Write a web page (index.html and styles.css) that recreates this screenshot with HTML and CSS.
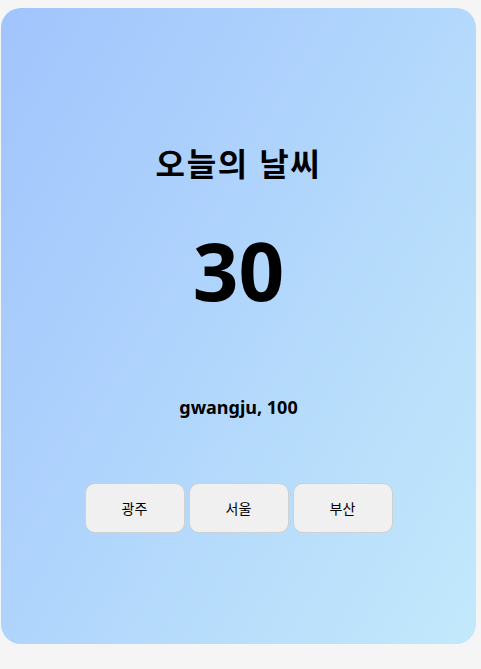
FILE: index.html
```html
<!DOCTYPE html>
<html lang="ko">
<head>
<meta charset="utf-8">
<link rel="stylesheet" href="styles.css">
<title>오늘의 날씨</title>
</head>
<body>
<div class="card">
  <h1 class="title">오늘의 날씨</h1>
  <div class="temp">30</div>
  <div class="info">gwangju, 100</div>
  <div class="buttons">
    <button class="btn">광주</button>
    <button class="btn">서울</button>
    <button class="btn">부산</button>
  </div>
</div>
</body>
</html>
```
FILE: styles.css
```css
html, body {
  margin: 0;
  padding: 0;
  background: #f5f5f5;
}
body {
  padding: 8px 5px 25px 1px;
  font-family: "Noto Sans", "Noto Sans CJK KR", sans-serif;
}
.card {
  height: 636px;
  box-sizing: border-box;
  border-radius: 20px;
  background: linear-gradient(120deg, #a1c4fd 0%, #c2e9fb 100%);
  display: flex;
  flex-direction: column;
  align-items: center;
  padding-top: 134px;
}
.title {
  margin: 0;
  font-family: "Noto Sans CJK KR", sans-serif;
  font-size: 32px;
  line-height: 40px;
  font-weight: 700;
  letter-spacing: 1.6px;
  color: #000;
}
.temp {
  margin-top: 40px;
  font-size: 80px;
  line-height: 96px;
  font-weight: 700;
  color: #000;
}
.info {
  margin-top: 77px;
  font-size: 18px;
  line-height: 24px;
  font-weight: 700;
  color: #000;
}
.buttons {
  margin-top: 64px;
  display: flex;
  gap: 4px;
}
.btn {
  width: 100px;
  height: 50px;
  border: 1px solid #d0d0d0;
  border-radius: 10px;
  background: #f0f0f0;
  font-family: "Noto Sans CJK KR", sans-serif;
  font-size: 14px;
  color: #000;
  padding: 0;
}
```
